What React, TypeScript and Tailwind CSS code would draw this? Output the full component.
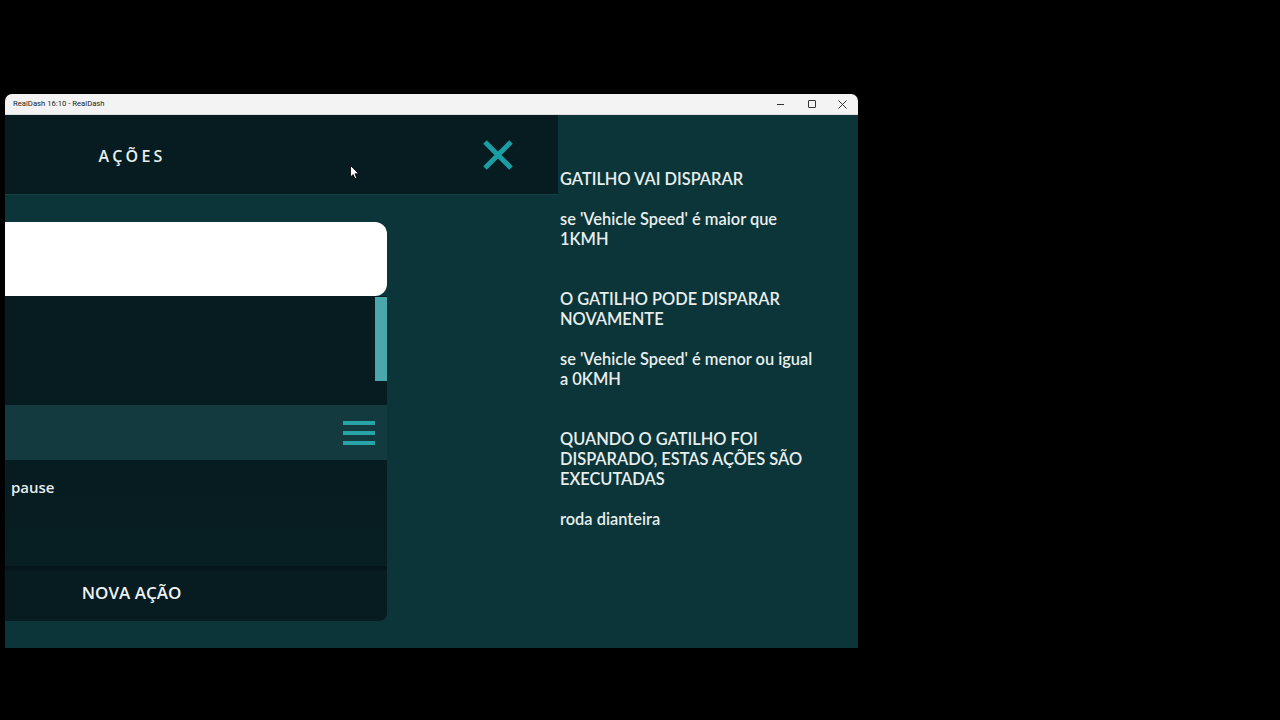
import React from "react";

const lato = { fontFamily: "Lato, 'Open Sans', sans-serif" };

export default function App() {
  return (
    <div className="w-[1280px] h-[720px] bg-black relative overflow-hidden" style={lato}>
      <div className="absolute left-[5px] top-[94px] w-[853px] h-[554px] flex flex-col overflow-hidden rounded-t-[7px]">
        {/* Title bar */}
        <div className="h-[21px] bg-[#f3f3f3] flex items-center justify-between border-b border-[#dcdcdc]">
          <span className="pl-[8px] text-[7.7px] text-[#222]" style={{ fontFamily: "Roboto, 'Liberation Sans', sans-serif" }}>
            RealDash 16:10 - RealDash
          </span>
          <div className="flex items-center h-full">
            <div className="w-[31px] h-full flex items-center justify-center">
              <div className="w-[7px] h-[1px] bg-[#333]" />
            </div>
            <div className="w-[31px] h-full flex items-center justify-center">
              <div className="w-[8px] h-[8px] border border-[#333] rounded-[1px]" />
            </div>
            <div className="w-[31px] h-full flex items-center justify-center">
              <svg width="9" height="9" viewBox="0 0 9 9">
                <path d="M0.5 0.5 L8.5 8.5 M8.5 0.5 L0.5 8.5" stroke="#333" strokeWidth="1" />
              </svg>
            </div>
          </div>
        </div>
        {/* Content */}
        <div className="flex-1 flex bg-[#0b3538] relative">
          {/* Left column */}
          <div className="w-[553px] flex flex-col">
            <div className="h-[80px] bg-[#061c20] border-b border-[#134145] flex items-center">
              <div className="w-[254px] pt-[2px] text-center text-[16px] font-semibold tracking-[3.2px] text-[#e9eeee]" style={{ fontFamily: "'Open Sans', Lato, sans-serif" }}>
                AÇÕES
              </div>
              <div className="flex-1" />
              <div className="w-[36px] h-[36px] mr-[42px] flex items-center justify-center">
                <svg width="32" height="32" viewBox="0 0 32 32">
                  <path d="M3 3 L29 29 M29 3 L3 29" stroke="#1b9da4" strokeWidth="5" strokeLinecap="butt" />
                </svg>
              </div>
            </div>
            <div className="pt-[27px] w-[382px] flex flex-col">
              <div className="h-[74px] bg-white rounded-r-[12px]" />
              <div className="relative flex flex-col">
                <div className="h-[109px] bg-[#061c20]" />
                <div className="h-[55px] bg-[#133b3f] flex items-center justify-end pr-[12px]">
                  <svg width="32" height="26" viewBox="0 0 32 26">
                    <rect x="0" y="1" width="32" height="4" fill="#27a3a9" />
                    <rect x="0" y="11" width="32" height="4" fill="#27a3a9" />
                    <rect x="0" y="21" width="32" height="4" fill="#27a3a9" />
                  </svg>
                </div>
                <div className="h-[106px] bg-gradient-to-b from-[#061c20] to-[#071e23] pt-[15px] pl-[6px]">
                  <span className="text-[15px] font-semibold text-[#e6ecec]" style={{ fontFamily: "'Open Sans', Lato, sans-serif" }}>pause</span>
                </div>
                <div className="h-[4px] bg-[#04161a]" />
                <div className="absolute right-0 top-[1px] w-[12px] h-[84px] bg-[#4aa7ac]" />
              </div>
              <div className="h-[51px] bg-[#061c20] rounded-br-[8px] flex items-center pb-[5px]">
                <div className="w-[253px] text-center text-[17px] font-semibold text-[#eef2f2]" style={{ fontFamily: "'Open Sans', Lato, sans-serif" }}>
                  NOVA AÇÃO
                </div>
              </div>
            </div>
          </div>
          {/* Right column */}
          <div className="flex-1 pl-[2px] pt-[54px]">
            <div className="w-[260px] text-[16.4px] leading-[20px] font-semibold text-[#e8eeee]">
              <p>GATILHO VAI DISPARAR</p>
              <p className="mt-[20px]">se 'Vehicle Speed' é maior que 1KMH</p>
              <p className="mt-[40px]">O GATILHO PODE DISPARAR NOVAMENTE</p>
              <p className="mt-[20px]">se 'Vehicle Speed' é menor ou igual a 0KMH</p>
              <p className="mt-[40px]">QUANDO O GATILHO FOI DISPARADO, ESTAS AÇÕES SÃO EXECUTADAS</p>
              <p className="mt-[20px]">roda dianteira</p>
            </div>
          </div>
          {/* mouse cursor */}
          <svg className="absolute left-[345px] top-[50px]" width="10" height="15" viewBox="0 0 10 15">
            <path d="M0.5 0.5 L0.5 12 L3.2 9.5 L5 13.8 L6.8 13 L5 8.8 L8.8 8.8 Z" fill="#fff" stroke="#000" strokeWidth="0.8" />
          </svg>
        </div>
      </div>
    </div>
  );
}
